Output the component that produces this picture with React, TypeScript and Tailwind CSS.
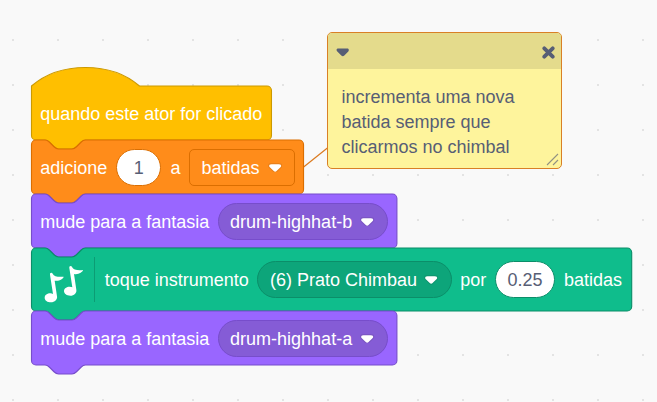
import type { ReactNode } from "react";

// Block outlines are described in workspace units; the workspace is zoomed by this factor.
const ZOOM = 1.125;

const NOTCH_RIGHT = "c2,0 3,1 4,2 l4,4 c1,1 2,2 4,2 h12 c2,0 3,-1 4,-2 l4,-4 c1,-1 2,-2 4,-2";
const NOTCH_LEFT = "c-2,0 -3,1 -4,2 l-4,4 c-1,1 -2,2 -4,2 h-12 c-2,0 -3,-1 -4,-2 l-4,-4 c-1,-1 -2,-2 -4,-2";

function outline(width: number, height: number, hat: boolean) {
  const top = hat ? "M0,0 c25,-22 71,-22 96,0" : `M0,4 A4,4 0 0,1 4,0 H12 ${NOTCH_RIGHT}`;
  return `${top} H${width - 4} a4,4 0 0,1 4,4 V${height - 4} a4,4 0 0,1 -4,4 H48 ${NOTCH_LEFT} H4 a4,4 0 0,1 -4,-4 z`;
}

type BlockProps = {
  width: number;
  height?: number;
  hat?: boolean;
  fill: string;
  stroke: string;
  className: string;
  children: ReactNode;
};

function Block({ width, height = 48, hat = false, fill, stroke, className, children }: BlockProps) {
  return (
    <div className={`relative flex items-center pl-[9px] ${className}`}>
      <svg className="absolute left-0 top-0 overflow-visible" width="1" height="1">
        <path d={outline(width, height, hat)} transform={`translate(0.5 0) scale(${ZOOM})`} className={`${fill} ${stroke}`} />
      </svg>
      {children}
    </div>
  );
}

function Label({ className, children }: { className: string; children: ReactNode }) {
  return <span className={`relative shrink-0 whitespace-nowrap pt-[1px] ${className}`}>{children}</span>;
}

function Arrow() {
  return (
    <svg className="shrink-0" width="14.3" height="9.9" viewBox="0 0 12.71 8.79">
      <path
        opacity=".1"
        fill="#231f20"
        d="M12.71,2.44A2.41,2.41,0,0,1,12,4.16L8.08,8.08a2.45,2.45,0,0,1-3.45,0L0.72,4.16A2.42,2.42,0,0,1,0,2.44,2.48,2.48,0,0,1,.71.71C1,0.47,1.43,0,6.36,0S11.75,0.46,12,.71A2.44,2.44,0,0,1,12.71,2.44Z"
      />
      <path
        fill="#fff"
        d="M6.36,7.79a1.43,1.43,0,0,1-1-.42L1.42,3.45a1.44,1.44,0,0,1,0-2c0.56-.56,9.31-0.56,9.87,0a1.44,1.44,0,0,1,0,2L7.37,7.37A1.43,1.43,0,0,1,6.36,7.79Z"
      />
    </svg>
  );
}

function Dropdown({ className, children }: { className: string; children: ReactNode }) {
  return (
    <span className={`relative flex h-[37px] shrink-0 items-center justify-between whitespace-nowrap border pt-[1px] ${className}`}>
      {children}
      <Arrow />
    </span>
  );
}

function NumberInput({ className, children }: { className: string; children: ReactNode }) {
  return (
    <span className={`relative flex h-[37px] shrink-0 items-center justify-center rounded-full border bg-white pt-[1px] text-[#575e75] ${className}`}>
      {children}
    </span>
  );
}

function MusicIcon() {
  const note =
    "M92,114 Q96,112 98,116 C102,124 114,127 131,125 C130,131 117,140 104,137 L111,184 C113,194 104,202 93,202 C82,202 74,196 74,188 C74,180 82,175 91,175 Q96,175 99,177 L90,119 Q89,115 92,114 Z";
  return (
    <svg className="relative shrink-0" width="45" height="50" viewBox="60 60 135 150" fill="#fff">
      <path d={note} />
      <path d={note} transform="translate(58 -20)" />
    </svg>
  );
}

function CostumeBlock({ costume }: { costume: string }) {
  return (
    <Block width={324.800} fill="fill-[#9966ff]" stroke="stroke-[#774dcb]" className="h-[54px]">
      <Label className="w-[177.4px]">mude para a fantasia</Label>
      <Dropdown className="w-[170.5px] rounded-full border-[#774dcb] bg-[#855cd6] pl-[11.5px] pr-[12.5px]">{costume}</Dropdown>
    </Block>
  );
}

function Comment() {
  return (
    <div className="absolute left-[327px] top-[32px] h-[137px] w-[235px] overflow-hidden rounded-[5px] border border-[#d98026] bg-[#fef49c] text-[#575e75]">
      <div className="flex h-[36px] items-center justify-between bg-[#e4db8c] pl-[8px] pr-[6px]">
        <svg className="mt-[3px]" width="13" height="9" viewBox="0 0 13 9" fill="#575e75">
          <path d="M2.3,0.6 H11.3 C13,0.6 13.2,2.4 12.300,3.6 L8.3,7.6 Q6.8,9 5.3,7.6 L1.3,3.6 C0.1,2.4 0.3,0.6 2.3,0.6 Z" />
        </svg>
        <svg className="mt-[2px]" width="13" height="13" viewBox="0 0 13 13" stroke="#575e75" strokeWidth="3.8" strokeLinecap="round">
          <path d="M2.3,2.3 L10.7,10.7 M10.7,2.3 L2.3,10.7" />
        </svg>
      </div>
      <p className="w-[220px] whitespace-pre-line pl-[13.5px] pt-[16px] leading-[25px]">
        {"incrementa uma nova\nbatida sempre que\nclicarmos no chimbal"}
      </p>
      <svg className="absolute bottom-[2px] right-[2px]" width="13" height="13" viewBox="0 0 13 13" stroke="#575e75" strokeOpacity=".65" strokeWidth="1.1">
        <path d="M1,12 L12,1 M7,12 L12,7" />
      </svg>
    </div>
  );
}

export default function App() {
  return (
    <main className="relative h-[402px] w-[657px] overflow-hidden bg-[#f9f9f9] font-['Liberation_Sans',Arial,sans-serif] text-[18px] leading-[20px] text-white">
      <svg className="absolute inset-0" width="657" height="402">
        <defs>
          <pattern id="grid" x="12" y="39" width="45" height="45" patternUnits="userSpaceOnUse">
            <rect width="2" height="2" fill="#e3e3e3" />
          </pattern>
        </defs>
        <rect width="657" height="402" fill="url(#grid)" />
        <path d="M303,167.500 L328,147.500" stroke="#db7a1f" strokeWidth="1.2" />
      </svg>

      <div className="absolute left-[31.2px] top-[86px] flex flex-col">
        <Block hat width={213.300} fill="fill-[#ffbf00]" stroke="stroke-[#cc9900]" className="h-[54px]">
          <Label className="w-[222px]">quando este ator for clicado</Label>
        </Block>
        <Block width={241.800} fill="fill-[#ff8c1a]" stroke="stroke-[#db6e00]" className="h-[54px]">
          <Label className="w-[76.2px]">adicione</Label>
          <NumberInput className="w-[45px] border-[#db6e00]">1</NumberInput>
          <Label className="ml-[9px] w-[18.6px]">a</Label>
          <Dropdown className="w-[106px] rounded-[5px] border-[#db6e00] pl-[11.5px] pr-[12px]">batidas</Dropdown>
        </Block>
        <CostumeBlock costume="drum-highhat-b" />
        <Block width={533.500} height={56} fill="fill-[#0fbd8c]" stroke="stroke-[#0b8e69]" className="h-[63px]">
          <MusicIcon />
          <span className="relative ml-[8.5px] mr-[10px] h-[45px] w-px bg-[#0b8e69]/70" />
          <Label className="w-[152.3px]">toque instrumento</Label>
          <Dropdown className="w-[195px] rounded-full border-[#0b8e69] bg-[#0da57a] pl-[12px] pr-[13px]">(6) Prato Chimbau</Dropdown>
          <Label className="ml-[8.2px] w-[34.8px]">por</Label>
          <NumberInput className="w-[60px] border-[#0b8e69]">0.25</NumberInput>
          <Label className="ml-[9px]">batidas</Label>
        </Block>
        <CostumeBlock costume="drum-highhat-a" />
      </div>

      <Comment />
    </main>
  );
}
